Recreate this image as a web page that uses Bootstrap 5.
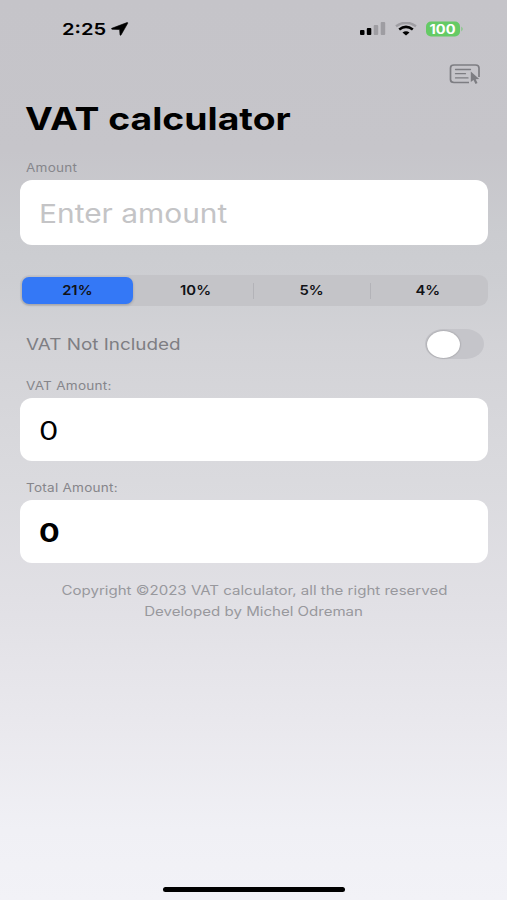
<!DOCTYPE html>
<html lang="en">
<head>
<meta charset="utf-8">
<meta name="viewport" content="width=device-width, initial-scale=1">
<title>VAT calculator</title>
<link href="https://cdn.jsdelivr.net/npm/bootstrap@5.3.0/dist/css/bootstrap.min.css" rel="stylesheet">
<style>
body{font-family:Inter,"Liberation Sans",sans-serif;color:#000;background:#f1f1f6}
.screen{height:900px;padding:0 19px 0 20px;background:linear-gradient(#c5c4c9 0,#c6c5ca 150px,#cbccd0 235px,#cdced2 280px,#d3d3d7 345px,#dadade 480px,#e1e0e5 600px,#e9e8ed 720px,#f0f0f5 830px,#f2f2f7 900px)}
.wide{display:inline-block;transform:scaleX(1.18);transform-origin:left center;white-space:nowrap}
.wide-c{transform-origin:center}
.status{height:58px;padding-left:42px;padding-right:24px}
.clock{font-size:16.5px;font-weight:600;width:49px}
.clock .wide{transform:scaleX(1.22)}
.tools{height:32px;padding-right:7px}
.title{height:58px;padding:0 0 0 5px;font-size:31.5px;font-weight:700;line-height:1}
.title .wide{transform:scaleX(1.185)}
.cap{font-size:11.5px;color:#86868b;padding-left:6px;line-height:1;letter-spacing:.2px}
.field{background:#fff;border:0;border-radius:12px;padding:2px 19px 0;font-size:26px;line-height:1}
.field-lg{height:65px;color:#c4c4c6}
.field-lg .wide{transform:scaleX(1.15)}
.field-md{height:63px}
.segments{height:31px;margin-top:30px;padding:2px;border-radius:9px;background:#c4c4c8;font-size:13px;font-weight:600;color:#111216}
.segments .btn{font:inherit;color:inherit;border:0;padding:0;line-height:1;border-radius:7px;flex:1 1 0}
.segments .wide{transform:scaleX(1.14)}
.segments .on{background:#3478f6;flex:0 0 111px;margin-right:4px;box-shadow:0 1px 3px #0003}
.segments .btn+.btn+.btn{position:relative}
.segments .btn+.btn+.btn::before{content:"";position:absolute;left:0;top:6px;height:16px;width:1px;background:#b3b3b8}
.switchrow{height:32px;margin-top:22px;padding:0 4px 0 6px;font-size:16.5px;color:#7e7e83}
.switchrow .wide{transform:scaleX(1.145)}
.track{width:59px;height:30px;border-radius:18px/15px;background:#c5c5ca;padding:1.5px 2px}
.knob{width:33px;height:27px;border-radius:50%;background:#fff;box-shadow:0 0 2px #0005}
.foot{font-size:12.6px;line-height:21px;color:#98989d;margin-top:17px}
.foot .wide{transform:scaleX(1.195)}
.home{width:182px;height:5px;border-radius:3px;background:#000;margin-bottom:8px}
</style>
<script src="https://cdn.jsdelivr.net/npm/bootstrap@5.3.0/dist/js/bootstrap.bundle.min.js"></script>
</head>
<body>
<main class="screen d-flex flex-column overflow-hidden">
  <header class="status d-flex align-items-center">
    <div class="clock"><span class="wide">2:25</span></div>
    <svg width="18" height="14" viewBox="0 0 18 14"><path d="M.8 6.300 16 .600q1-.200.700.700L10 13q-.800.800-1-.300L8.600 7.500 1 7.300Q0 6.900.800 6.300Z" stroke="#000" stroke-width=".6"/></svg>
    <svg class="ms-auto" width="27" height="14" viewBox="0 0 27 14"><rect x="1" y="8" width="4.500" height="5" rx="1"/><rect x="7.800" y="6" width="4.500" height="7" rx="1"/><g fill="#9e9da2"><rect x="14.700" y="3" width="4.500" height="10" rx="1"/><rect x="21.700" y="0" width="4.500" height="13" rx="1"/></g></svg>
    <svg style="margin-left:9px" width="22" height="14" viewBox="0 0 22 14" fill="none"><path d="M1 4.300Q11-2.800 21 4.300" stroke="#9e9da2" stroke-width="2.400"/><path d="M4.200 7.600Q11 2.200 17.800 7.600" stroke="#000" stroke-width="2.600"/><path d="M7.500 10.500Q11 7.800 14.500 10.500L11 13.600Z" fill="#000"/></svg>
    <svg style="margin-left:9px" width="38" height="16" viewBox="0 0 38 16"><rect width="34" height="15" y=".5" rx="5" fill="#65ca65"/><path d="M35.500 5.500q2 2.500 0 5Z" fill="#65ca65"/><text x="3.500" y="12.600" font-size="12.500" font-weight="700" fill="#fff" textLength="26" lengthAdjust="spacingAndGlyphs">100</text></svg>
  </header>
  <div class="tools d-flex justify-content-end align-items-center">
    <svg width="32" height="22" viewBox="0 0 32 22" fill="none" stroke="#7d7d82"><path d="M20 19.500H5Q1.500 19.500 1.500 16.500V5Q1.500 2 5 2H26.500Q30 2 30 5V14" stroke-width="1.700"/><path d="M6.500 6.500H21.500M6.500 10.700H16.500M6.500 14.900H19" stroke-width="1.300" stroke-linecap="round"/><path d="M21.800 8.500V19L24.500 17 26.500 21 28.500 20.100 26.700 16.300 30.200 16Z" fill="#7d7d82" stroke="none"/></svg>
  </div>
  <h1 class="title d-flex align-items-center m-0"><span class="wide">VAT calculator</span></h1>
  <div class="cap" style="margin-top:15px;height:17px"><span class="wide">Amount</span></div>
  <div class="field field-lg d-flex align-items-center"><span class="wide">Enter amount</span></div>
  <div class="segments d-flex" role="group">
    <button class="btn on"><span class="wide wide-c">21%</span></button>
    <button class="btn"><span class="wide wide-c">10%</span></button>
    <button class="btn"><span class="wide wide-c">5%</span></button>
    <button class="btn"><span class="wide wide-c">4%</span></button>
  </div>
  <div class="switchrow d-flex justify-content-between align-items-center"><span class="wide">VAT Not Included</span><div class="track"><div class="knob"></div></div></div>
  <div class="cap" style="margin-top:21px;height:17px"><span class="wide">VAT Amount:</span></div>
  <div class="field field-md d-flex align-items-center"><span class="wide">0</span></div>
  <div class="cap" style="margin-top:22px;height:17px"><span class="wide">Total Amount:</span></div>
  <div class="field field-md d-flex align-items-center fw-bold"><span class="wide">0</span></div>
  <footer class="foot text-center"><span class="wide wide-c">Copyright ©2023 VAT calculator, all the right reserved</span><br><span class="wide wide-c">Developed by Michel Odreman</span></footer>
  <div class="home mt-auto mx-auto"></div>
</main>
</body>
</html>
